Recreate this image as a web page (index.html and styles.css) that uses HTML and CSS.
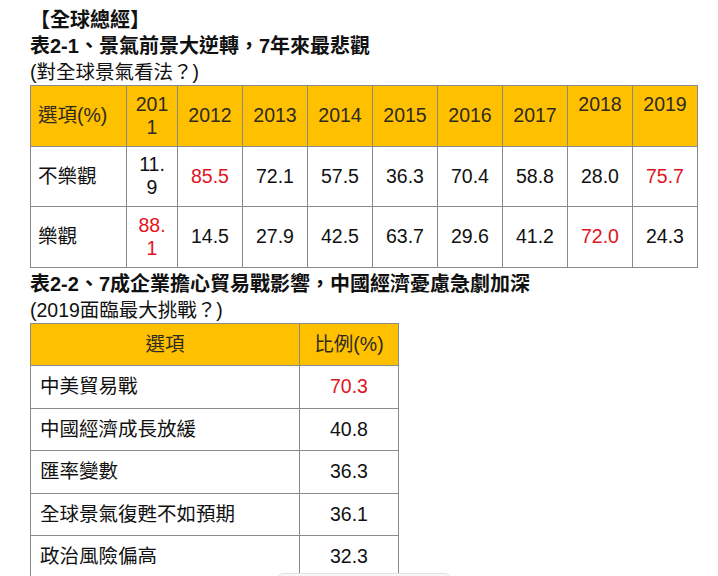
FILE: index.html
```html
<!DOCTYPE html>
<html lang="zh-Hant">
<head>
<meta charset="utf-8">
<title>全球總經</title>
<link rel="stylesheet" href="styles.css">
</head>
<body>
<div class="page">
  <p class="heading">【全球總經】</p>
  <p class="heading">表2-1、景氣前景大逆轉，7年來最悲觀</p>
  <p class="note">(對全球景氣看法？)</p>
  <table class="grid grid-years">
    <colgroup>
      <col class="c-label"><col class="c-narrow">
      <col class="c-year"><col class="c-year"><col class="c-year"><col class="c-year">
      <col class="c-year"><col class="c-year"><col class="c-year"><col class="c-year">
    </colgroup>
    <thead>
      <tr>
        <th class="left">選項(%)</th>
        <th>2011</th><th>2012</th><th>2013</th><th>2014</th><th>2015</th><th>2016</th><th>2017</th>
        <th class="top">2018</th><th class="top">2019</th>
      </tr>
    </thead>
    <tbody>
      <tr>
        <td class="left">不樂觀</td>
        <td>11.9</td><td class="hi">85.5</td><td>72.1</td><td>57.5</td><td>36.3</td><td>70.4</td><td>58.8</td><td>28.0</td><td class="hi">75.7</td>
      </tr>
      <tr>
        <td class="left">樂觀</td>
        <td class="hi">88.1</td><td>14.5</td><td>27.9</td><td>42.5</td><td>63.7</td><td>29.6</td><td>41.2</td><td class="hi">72.0</td><td>24.3</td>
      </tr>
    </tbody>
  </table>
  <p class="heading second">表2-2、7成企業擔心貿易戰影響，中國經濟憂慮急劇加深</p>
  <p class="note">(2019面臨最大挑戰？)</p>
  <table class="grid grid-list">
    <colgroup><col class="c-item"><col class="c-pct"></colgroup>
    <thead>
      <tr><th>選項</th><th>比例(%)</th></tr>
    </thead>
    <tbody>
      <tr><td class="left">中美貿易戰</td><td class="hi">70.3</td></tr>
      <tr><td class="left">中國經濟成長放緩</td><td>40.8</td></tr>
      <tr><td class="left">匯率變數</td><td>36.3</td></tr>
      <tr><td class="left">全球景氣復甦不如預期</td><td>36.1</td></tr>
      <tr><td class="left">政治風險偏高</td><td>32.3</td></tr>
    </tbody>
  </table>
</div>
<div class="popup"></div>
</body>
</html>
```
FILE: styles.css
```css
html, body {
  margin: 0;
  padding: 0;
  background: #ffffff;
  overflow: hidden;
}
body {
  width: 718px;
  height: 576px;
  position: relative;
  font-family: "Liberation Sans", "Noto Sans CJK TC", sans-serif;
  font-size: 19.5px;
  color: #111;
}
.page {
  padding: 7px 0 0 30px;
}
.heading, .note {
  margin: 0;
  line-height: 26px;
  white-space: nowrap;
}
.heading {
  font-weight: bold;
  font-size: 20px;
  color: #111;
}
.heading.second {
  margin-top: 3px;
}
.grid {
  border-collapse: collapse;
  table-layout: fixed;
}
.grid th, .grid td {
  border: 1px solid #8a8a8a;
  font-weight: normal;
  text-align: center;
  vertical-align: middle;
  line-height: 23px;
  word-break: break-all;
}
.grid th {
  background: #ffc000;
  color: #2e2a20;
}
.grid .left {
  text-align: left;
}
.grid th.top {
  vertical-align: top;
}
.grid .hi {
  color: #e0141e;
}
.grid-years {
  width: 667px;
}
.grid-years th, .grid-years td {
  padding: 6.75px 7px;
}
.c-label { width: 96px; }
.c-narrow { width: 51px; }
.c-year { width: 65px; }
.grid-list {
  width: 368px;
}
.grid-list th, .grid-list td {
  padding: 9.25px 9px;
}
.c-item { width: 269px; }
.c-pct { width: 99px; }
.popup {
  position: absolute;
  left: 278px;
  top: 573px;
  width: 170px;
  height: 20px;
  border: 1px solid #e2e2e2;
  border-radius: 5px;
  background: #f8f8f8;
}
```
